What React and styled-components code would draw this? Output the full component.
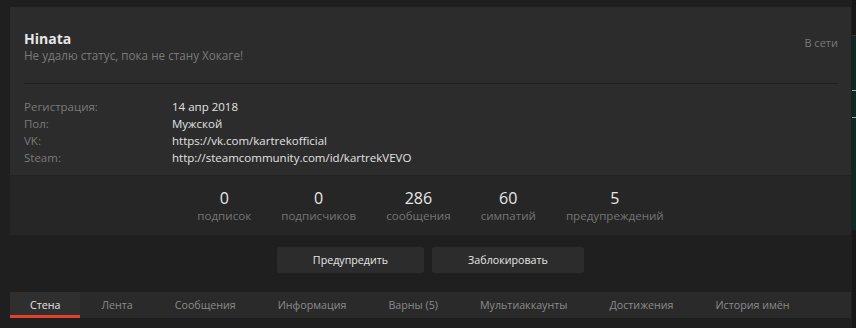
import styled, { createGlobalStyle } from "styled-components";

const Global = createGlobalStyle`
  body {
    margin: 0;
    background: #1f1f1f;
    font-family: "Open Sans", "Noto Sans", sans-serif;
    overflow: hidden;
  }
`;

/* вся страница */
const Page = styled.div`
  display: flex;
  width: 856px;
  height: 328px;
  padding-left: 10px;
  box-sizing: border-box;
`;

const Main = styled.main`
  width: 841px;
  flex-shrink: 0;
  padding-top: 7px;
`;

/* обрезанная колонка справа */
const SideStrip = styled.aside`
  flex: 1;
  margin-left: 1px;
  display: flex;
  flex-direction: column;
  background: #171717;
`;

const SideImage = styled.div`
  margin-top: 35px;
  height: 195px;
  background: #0e2823;
  border-top: 1px solid #5a2a22;
  display: flex;
  flex-direction: column;
  gap: 26px;
  padding-top: 54px;
  box-sizing: border-box;
  & > span {
    height: 1px;
    background: #9aa;
  }
`;

/* карточка профиля */
const Card = styled.section`
  background: #2c2c2c;
`;

const Head = styled.div`
  padding: 23px 13px 0 14px;
`;

const TitleRow = styled.div`
  display: flex;
  justify-content: space-between;
  align-items: flex-start;
  padding-bottom: 19px;
  border-bottom: 1px solid #1f1f1f;
`;

const Name = styled.div`
  color: #e6e6e6;
  font-size: 14px;
  font-weight: 700;
  line-height: 17px;
`;

const Status = styled.div`
  color: #7a7a7a;
  font-size: 11.7px;
  line-height: 17px;
`;

const Online = styled.div`
  color: #7a7a7a;
  font-size: 11px;
  line-height: 17px;
  margin-top: 4px;
`;

const InfoList = styled.dl`
  display: grid;
  grid-template-columns: 148px 1fr;
  grid-auto-rows: 17px;
  margin: 0;
  padding: 14px 0 9px;
  font-size: 11.5px;
  line-height: 17px;
  dt {
    color: #7a7a7a;
  }
  dd {
    margin: 0;
    color: #e2e2e2;
  }
`;

const Stats = styled.div`
  background: #262626;
  display: flex;
  justify-content: center;
  gap: 30px;
  padding: 12px 0 11px;
  border-top: 1px solid #232323;
`;

const Stat = styled.div`
  display: flex;
  flex-direction: column;
  align-items: center;
  strong {
    color: #e6e6e6;
    font-size: 16px;
    font-weight: 400;
    line-height: 20px;
  }
  span {
    color: #757575;
    font-size: 11.6px;
    line-height: 16px;
  }
`;

const Actions = styled.div`
  display: flex;
  justify-content: center;
  gap: 8px;
  padding: 12px 0 19px;
`;

const Button = styled.button`
  width: ${(p) => p.$w}px;
  height: 26px;
  border: 0;
  border-radius: 2px;
  background: #2c2c2c;
  color: #e6e6e6;
  font-family: inherit;
  font-size: 10.7px;
  cursor: pointer;
`;

const Tabs = styled.nav`
  display: flex;
  background: #2a2a2a;
  height: 26px;
`;

const Tab = styled.a`
  display: flex;
  align-items: center;
  padding: 0 ${(p) => p.$pad}px;
  font-size: 10.7px;
  color: ${(p) => (p.$active ? "#e6e6e6" : "#8a8a8a")};
  background: ${(p) => (p.$active ? "#2f2f2f" : "transparent")};
  box-shadow: ${(p) => (p.$active ? "inset 0 -3px 0 #e0412c" : "none")};
  cursor: pointer;
`;

const info = [
  ["Регистрация:", "14 апр 2018"],
  ["Пол:", "Мужской"],
  ["VK:", "https://vk.com/kartrekofficial"],
  ["Steam:", "http://steamcommunity.com/id/kartrekVEVO"],
];

const stats = [
  ["0", "подписок"],
  ["0", "подписчиков"],
  ["286", "сообщения"],
  ["60", "симпатий"],
  ["5", "предупреждений"],
];

const tabs = [
  "Стена",
  "Лента",
  "Сообщения",
  "Информация",
  "Варны (5)",
  "Мультиаккаунты",
  "Достижения",
  "История имён",
];

export default function App() {
  return (
    <Page>
      <Global />
      <Main>
        <Card>
          <Head>
            <TitleRow>
              <div>
                <Name>Hinata</Name>
                <Status>Не удалю статус, пока не стану Хокаге!</Status>
              </div>
              <Online>В сети</Online>
            </TitleRow>
            <InfoList>
              {info.map(([k, v]) => [
                <dt key={k}>{k}</dt>,
                <dd key={k + "v"}>{v}</dd>,
              ])}
            </InfoList>
          </Head>
          <Stats>
            {stats.map(([n, l]) => (
              <Stat key={l}>
                <strong>{n}</strong>
                <span>{l}</span>
              </Stat>
            ))}
          </Stats>
        </Card>
        <Actions>
          <Button $w={147}>Предупредить</Button>
          <Button $w={152}>Заблокировать</Button>
        </Actions>
        <Tabs>
          {tabs.map((t, i) => (
            <Tab key={t} $active={i === 0} $pad={i === 0 ? 20 : 21}>
              {t}
            </Tab>
          ))}
        </Tabs>
      </Main>
      <SideStrip>
        <SideImage>
          <span />
          <span />
        </SideImage>
      </SideStrip>
    </Page>
  );
}
